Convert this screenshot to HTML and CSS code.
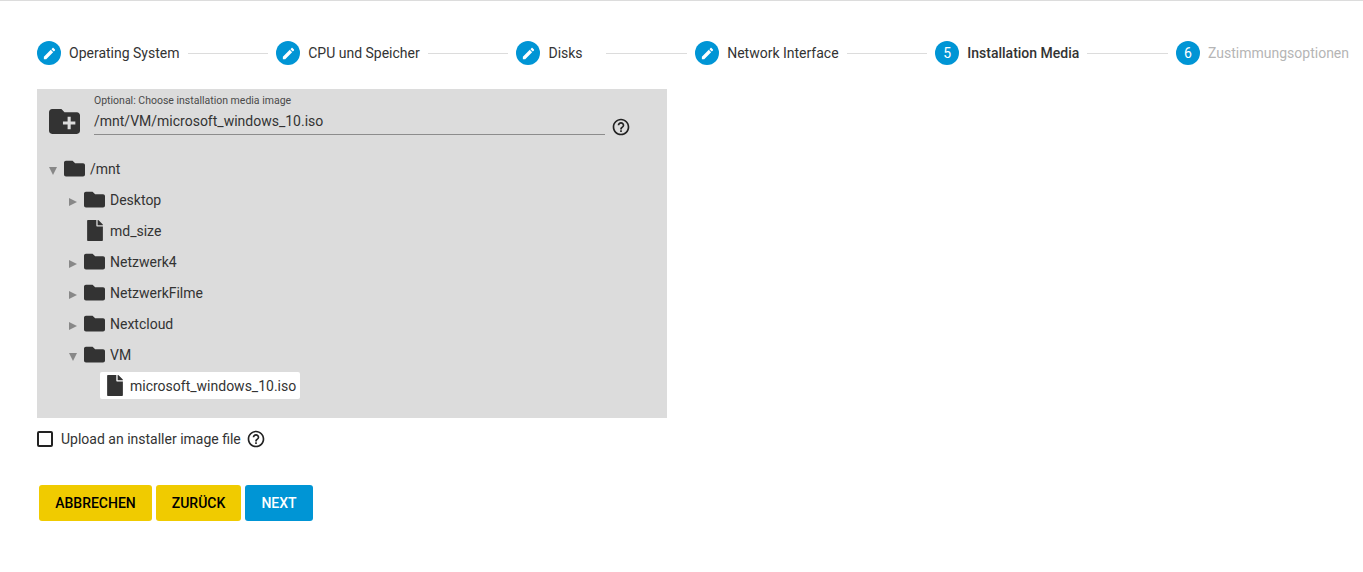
FILE: index.html
```html
<!DOCTYPE html>
<html lang="de">
<head>
<meta charset="utf-8">
<title>Installation Media</title>
<link rel="stylesheet" href="styles.css">
</head>
<body>
<svg class="defs" width="0" height="0" aria-hidden="true">
  <symbol id="i-pencil" viewBox="0 0 24 24"><path d="M3 17.25V21h3.75L17.81 9.94l-3.75-3.75L3 17.25zM20.71 7.04c.39-.39.39-1.02 0-1.41l-2.34-2.34c-.39-.39-1.02-.39-1.41 0l-1.83 1.83 3.75 3.75 1.83-1.83z"/></symbol>
  <symbol id="i-folder" viewBox="0 0 512 512"><path d="M464 128H272l-64-64H48C21.49 64 0 85.49 0 112v288c0 26.51 21.49 48 48 48h416c26.51 0 48-21.49 48-48V176c0-26.51-21.49-48-48-48z"/></symbol>
  <symbol id="i-file" viewBox="0 0 384 512"><path d="M224 136V0H24C10.7 0 0 10.7 0 24v464c0 13.3 10.7 24 24 24h336c13.3 0 24-10.7 24-24V160H248c-13.2 0-24-10.8-24-24zm160-14.1v6.1H256V0h6.1c6.4 0 12.5 2.5 17 7l97.9 98c4.5 4.5 7 10.6 7 16.9z"/></symbol>
  <symbol id="i-help" viewBox="0 0 24 24"><path d="M11 18h2v-2h-2v2zm1-16C6.48 2 2 6.48 2 12s4.48 10 10 10 10-4.48 10-10S17.52 2 12 2zm0 18c-4.41 0-8-3.59-8-8s3.59-8 8-8 8 3.59 8 8-3.59 8-8 8zm0-14c-2.21 0-4 1.79-4 4h2c0-1.1.9-2 2-2s2 .9 2 2c0 2-3 1.75-3 5h2c0-2.25 3-2.5 3-5 0-2.21-1.79-4-4-4z"/></symbol>
  <symbol id="i-down" viewBox="0 0 8 8"><path d="M0 0h8L4 8z"/></symbol>
  <symbol id="i-right" viewBox="0 0 8 8"><path d="M0 0l8 4-8 4z"/></symbol>
</svg>
<main class="page">
  <nav class="stepper">
    <div class="step"><span class="badge"><svg class="pencil"><use href="#i-pencil"/></svg></span><span class="step-label">Operating System</span></div>
    <div class="step-line"></div>
    <div class="step"><span class="badge"><svg class="pencil"><use href="#i-pencil"/></svg></span><span class="step-label">CPU und Speicher</span></div>
    <div class="step-line"></div>
    <div class="step"><span class="badge"><svg class="pencil"><use href="#i-pencil"/></svg></span><span class="step-label step-label-wide">Disks</span></div>
    <div class="step-line"></div>
    <div class="step"><span class="badge"><svg class="pencil"><use href="#i-pencil"/></svg></span><span class="step-label">Network Interface</span></div>
    <div class="step-line"></div>
    <div class="step"><span class="badge">5</span><span class="step-label step-label-active">Installation Media</span></div>
    <div class="step-line"></div>
    <div class="step"><span class="badge">6</span><span class="step-label step-label-todo">Zustimmungsoptionen</span></div>
  </nav>

  <section class="panel">
    <div class="picker">
      <svg class="new-folder" viewBox="2 4 20 16"><path d="M20 6h-8l-2-2H4c-1.11 0-1.99.89-1.99 2L2 18c0 1.11.89 2 2 2h16c1.11 0 2-.89 2-2V8c0-1.11-.89-2-2-2zm-1 8h-3v3h-2v-3h-3v-2h3V9h2v3h3v2z"/></svg>
      <div class="field">
        <label class="field-label">Optional: Choose installation media image</label>
        <div class="field-value">/mnt/VM/microsoft_windows_10.iso</div>
      </div>
      <svg class="help help-field"><use href="#i-help"/></svg>
    </div>

    <div class="tree">
      <div class="row">
        <svg class="toggle"><use href="#i-down"/></svg>
        <span class="entry"><span class="slot"><svg class="folder"><use href="#i-folder"/></svg></span><span>/mnt</span></span>
      </div>
      <div class="children">
        <div class="row">
          <svg class="toggle"><use href="#i-right"/></svg>
          <span class="entry"><span class="slot"><svg class="folder"><use href="#i-folder"/></svg></span><span>Desktop</span></span>
        </div>
        <div class="row">
          <span class="toggle"></span>
          <span class="entry"><span class="slot"><svg class="file"><use href="#i-file"/></svg></span><span>md_size</span></span>
        </div>
        <div class="row">
          <svg class="toggle"><use href="#i-right"/></svg>
          <span class="entry"><span class="slot"><svg class="folder"><use href="#i-folder"/></svg></span><span>Netzwerk4</span></span>
        </div>
        <div class="row">
          <svg class="toggle"><use href="#i-right"/></svg>
          <span class="entry"><span class="slot"><svg class="folder"><use href="#i-folder"/></svg></span><span>NetzwerkFilme</span></span>
        </div>
        <div class="row">
          <svg class="toggle"><use href="#i-right"/></svg>
          <span class="entry"><span class="slot"><svg class="folder"><use href="#i-folder"/></svg></span><span>Nextcloud</span></span>
        </div>
        <div class="row">
          <svg class="toggle"><use href="#i-down"/></svg>
          <span class="entry"><span class="slot"><svg class="folder"><use href="#i-folder"/></svg></span><span>VM</span></span>
        </div>
        <div class="children">
          <div class="row">
            <span class="toggle"></span>
            <span class="entry entry-selected"><span class="slot"><svg class="file"><use href="#i-file"/></svg></span><span>microsoft_windows_10.iso</span></span>
          </div>
        </div>
      </div>
    </div>
  </section>

  <div class="upload">
    <span class="checkbox"></span>
    <span>Upload an installer image file</span>
    <svg class="help"><use href="#i-help"/></svg>
  </div>

  <div class="actions">
    <button class="btn btn-yellow btn-cancel">ABBRECHEN</button>
    <button class="btn btn-yellow btn-back">ZURÜCK</button>
    <button class="btn btn-blue btn-next">NEXT</button>
  </div>
</main>
</body>
</html>
```
FILE: styles.css
```css
* { box-sizing: border-box; }

html, body { height: 100%; }

body {
  margin: 0;
  border-top: 1px solid #dcdcdc;
  background: #fff;
  color: #333;
  font-family: Roboto, "Liberation Sans", sans-serif;
  font-size: 14px;
  overflow: hidden;
}

.defs { position: absolute; }

svg { fill: currentColor; display: block; }

.page { padding: 40px 14px 0 37px; }

.stepper { display: flex; align-items: center; height: 24px; }

.step { display: flex; align-items: center; gap: 8px; }

.badge {
  display: flex;
  align-items: center;
  justify-content: center;
  width: 24px;
  height: 24px;
  border-radius: 50%;
  background: #0095d5;
  color: #fff;
}

.pencil { width: 15px; height: 15px; }

.step-label { white-space: nowrap; color: #333; }
.step-label-wide { min-width: 50px; }
.step-label-active { font-weight: 500; }
.step-label-todo { color: #b5b5b5; }

.step-line {
  flex: 1;
  height: 1px;
  margin: 0 8px;
  background: #dcdcdc;
}

.panel {
  width: 630px;
  height: 329px;
  margin-top: 24px;
  padding: 0 12px;
  background: #dcdcdc;
}

.picker { display: flex; height: 64px; }

.new-folder { width: 31px; height: 25px; margin-top: 20px; }

.field {
  width: 511px;
  height: 46px;
  margin-left: 14px;
  border-bottom: 1px solid #8c8c8c;
}

.field-label {
  display: block;
  padding-top: 6px;
  font-size: 10.5px;
  line-height: 12px;
  color: #4a4a4a;
}

.field-value { margin-top: 4px; line-height: 20px; }

.help { width: 20px; height: 20px; color: #222; }

.help-field { margin: 28px 0 0 6px; }

.children { padding-left: 20px; }

.row { display: flex; align-items: center; height: 31px; }

.toggle {
  flex: none;
  width: 8px;
  height: 8px;
  margin-right: 7px;
  margin-top: 5px;
  color: #888;
}

.entry {
  display: flex;
  align-items: center;
  gap: 5px;
  height: 27px;
  margin-left: -4px;
  padding: 0 4px;
  border-radius: 2px;
}

.entry-selected { background: #fff; }

.slot { display: flex; justify-content: center; width: 21px; }

.folder { width: 21px; height: 21px; }

.file { width: 16px; height: 21px; }

.upload {
  display: flex;
  align-items: center;
  height: 20px;
  margin-top: 11px;
  gap: 8px;
}

.upload .help { margin-left: -3px; }

.checkbox {
  width: 16px;
  height: 16px;
  border: 2px solid #222;
  border-radius: 2px;
  background: #fff;
}

.actions { display: flex; gap: 4px; margin: 36px 0 0 2px; }

.btn {
  height: 36px;
  padding: 0;
  border: 0;
  border-radius: 3px;
  font-family: inherit;
  font-size: 14px;
  font-weight: 500;
}

.btn-yellow { background: #f0cb00; color: #000; }
.btn-blue { background: #0095d5; color: #fff; }

.btn-cancel { width: 113px; }
.btn-back { width: 85px; }
.btn-next { width: 68px; }
```
